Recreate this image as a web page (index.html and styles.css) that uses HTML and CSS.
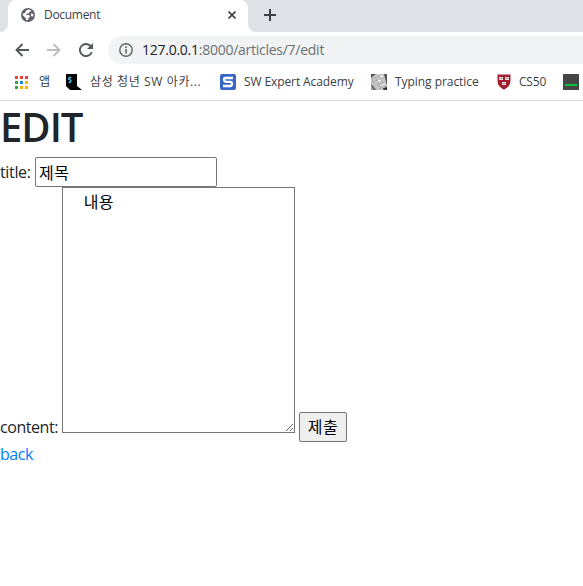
FILE: index.html
```html
<!DOCTYPE html>
<html lang="ko">
<head>
<meta charset="utf-8">
<title>Document</title>
<link rel="stylesheet" href="styles.css">
</head>
<body>
<header class="browser">
  <div class="tabs">
    <div class="tab-edge"></div>
    <div class="tab">
      <svg class="globe" width="14" height="14" viewBox="0 0 14 14"><circle cx="7" cy="7" r="7" fill="#5f6368"/><path d="M7 1.5 10 2 9.7 3.5 8.2 4 7.8 5.4 5.5 5.8 5.1 6.9 8.2 7.1 9 8.8 7.8 9.8 6.7 12.300 4.9 12.1 5 10.2 3.5 9.1 1.5 6.8 2.1 5.6 4 5.1 4.8 3.1Z M10.4 5.2 12.5 6.3 12.2 8.600 10.4 8.3 9.7 6.5Z" fill="#fff"/></svg>
      <span class="tab-title">Document</span>
      <svg class="close" width="8" height="8" viewBox="0 0 8 8"><path d="m.5.5 7 7m0-7-7 7" stroke="#3c4043" stroke-width="1.6"/></svg>
    </div>
    <div class="tab-rest"><svg width="12" height="12" viewBox="0 0 12 12"><path d="M6 0v12M0 6h12" stroke="#3c4043" stroke-width="2"/></svg></div>
  </div>
  <div class="toolbar">
    <svg class="nav" width="14" height="14" viewBox="0 0 14 14"><path d="M14 7H1.5M7.5 1l-6 6 6 6" fill="none" stroke="#54575c" stroke-width="1.9"/></svg>
    <svg class="nav" width="14" height="14" viewBox="0 0 14 14"><path d="M0 7h12.5M6.5 1l6 6-6 6" fill="none" stroke="#babcbe" stroke-width="1.9"/></svg>
    <svg class="nav" width="14" height="14" viewBox="0 0 14 14"><path d="M12.8 9A6.1 6.1 0 1 1 11.6 3" fill="none" stroke="#54575c" stroke-width="1.9"/><path d="M14 0v6H8Z" fill="#54575c"/></svg>
    <div class="address">
      <svg width="14" height="14" viewBox="0 0 14 14"><circle cx="7" cy="7" r="6.2" fill="none" stroke="#5f6368" stroke-width="1.4"/><path d="M7 6v4.5M7 3.3v1.6" stroke="#5f6368" stroke-width="1.6"/></svg>
      <span class="url"><b>127.0.0.1</b>:8000/articles/7/edit</span>
    </div>
  </div>
  <nav class="bookmarks">
    <svg class="apps" width="13" height="13" viewBox="0 0 13 13"><path d="M0 0h3v3H0zm5 0h3v3H5zm5 0h3v3h-3z" fill="#ea4335"/><path d="M0 5h3v3H0zm0 5h3v3H0z" fill="#34a050"/><path d="M5 5h3v3H5z" fill="#1a86f0"/><path d="M10 5h3v3h-3zm-5 5h3v3H5zm5 0h3v3h-3z" fill="#fbb005"/></svg>
    <span class="bm bm-apps">앱</span>
    <svg width="16" height="16" viewBox="0 0 16 16"><path d="M0 0h11v12l5 4H4l-4-4Z" fill="#000"/><path d="M5.200 3.500H3.400L2.700 4.200v1l2.200 1.200v1.200l-.7.7H2.500" fill="none" stroke="#49b7df" stroke-width="1.4"/></svg>
    <span class="bm bm-samsung">삼성 청년 SW 아카...</span>
    <svg width="16" height="16" viewBox="0 0 16 16"><rect width="16" height="16" rx="2" fill="#3868c7"/><path d="M13 4H5.500Q4 4 4 5.500T5.500 7.800h5Q12 7.800 12 9.800T10.500 12H3" fill="none" stroke="#fff" stroke-width="2.300"/></svg>
    <span class="bm bm-expert">SW Expert Academy</span>
    <svg width="16" height="16" viewBox="0 0 16 16"><path d="M0 0h16v16H0z" fill="#c9c9c9"/><path d="M0 0h5L0 4Zm13 0h3v12Z" fill="#555"/><path d="m0 9 6 7H0Z" fill="#999"/><path d="m0 5 12-4M1 8l12-4M4 12l10-4M7 15l8-3M4 3l6 12M8 2l6 11M1 5l3 7" stroke="#999" stroke-width=".5"/><path d="m9 3 3-1M7 7l3-1m1 5 3-1" stroke="#eee" stroke-width="1.5"/><path d="m1 12 3 4m8-1 4-2v3Z" stroke="#444"/></svg>
    <span class="bm bm-typing">Typing practice</span>
    <svg class="shield" width="14" height="16" viewBox="0 0 14 16"><path d="M.5.5h13V7q0 5.500-6.500 8.700Q.5 12.500.5 7Z" fill="#a51c30"/><path d="M2 3h4v3H2zm6 0h4v3H8zM5 8h4v3H5z" fill="#eee"/><path d="M4 3v3m6-3v3M7 8v3M2 4.500h4m2 0h4M5 9.500h4" stroke="#b78a8f" stroke-width=".6"/></svg>
    <span class="bm bm-cs">CS50</span>
    <svg width="16" height="16" viewBox="0 0 16 16"><path d="M0 0h16v16H0z" fill="#454545"/><path d="M2 10h12v2H2z" fill="#05c53d"/></svg>
  </nav>
</header>
<main>
  <h1>EDIT</h1>
  <form>
    <div class="row">
      <label class="title-label" for="title">title:</label>
      <input id="title" type="text" value="제목">
    </div>
    <div class="row content-row">
      <label class="content-label" for="content">content:</label>
      <textarea id="content">    내용</textarea>
      <button type="button">제출</button>
    </div>
  </form>
  <a href="#">back</a>
</main>
</body>
</html>
```
FILE: styles.css
```css
* { box-sizing: border-box; }
body { margin: 0; height: 586px; overflow: hidden; background: #fff; color: #212529; font: 16px/24px "Open Sans", "Noto Sans CJK KR", sans-serif; }
svg { display: block; flex: none; }
.browser { height: 101px; border-bottom: 1px solid #dadce0; }
.tabs { display: flex; height: 32px; background: linear-gradient(#dee1e6 0 12px, #fff 12px); }
.tab-edge { width: 8px; background: #dee1e6; border-bottom-right-radius: 8px; }
.tab { display: flex; align-items: center; width: 240px; height: 32px; padding: 0 12px 2px 13px; background: #fff; border-radius: 8px 8px 0 0; }
.tab-title { margin-left: 9px; color: #3c4043; font-size: 12px; letter-spacing: -.3px; white-space: nowrap; }
.close { margin-left: auto; }
.tab-rest { flex: 1; padding: 9px 0 0 16px; background: #dee1e6; border-bottom-left-radius: 8px; }
.toolbar { display: flex; align-items: center; height: 36px; padding-left: 15px; }
.nav { margin-right: 18px; }
.address { display: flex; flex: 1; align-items: center; height: 28px; margin-left: -3px; padding-left: 11px; background: #f1f3f4; border-radius: 14px 0 0 14px; }
.url { margin-left: 9px; color: #6b6f73; font-size: 14px; letter-spacing: -.26px; white-space: nowrap; }
.url b { color: #202124; font-weight: 400; }
.bookmarks { display: flex; align-items: center; height: 32px; padding: 0 0 4px 15px; overflow: hidden; color: #3c4043; font-size: 12px; }
.bm { flex: none; margin-left: 8px; white-space: nowrap; }
.bm-apps { width: 27px; margin-left: 11px; }
.bm-samsung { width: 130px; letter-spacing: .62px; }
.bm-expert { width: 127px; letter-spacing: -.1px; }
.bm-typing { width: 101px; letter-spacing: -.05px; }
.bm-cs { width: 44px; letter-spacing: -.2px; }
.shield { margin-left: 1px; }
h1 { height: 56px; margin: 0; padding-top: 2px; font-size: 40px; line-height: 48px; font-weight: 600; letter-spacing: -1px; }
.row { display: flex; height: 30px; }
label { flex: none; white-space: nowrap; letter-spacing: -.45px; }
.title-label { width: 35px; padding-top: 3px; letter-spacing: -.35px; }
input, textarea, button { margin: 0; border: 1px solid #767676; color: #000; font: inherit; }
input, textarea { letter-spacing: .5px; background: #fff; }
input { width: 182px; height: 30px; padding: 1px 3px; border-radius: 2px; }
.content-row { height: 255px; }
.content-label { width: 62px; padding-top: 228px; }
textarea { width: 233px; height: 246px; padding: 2px; border-radius: 0; resize: both; }
button { width: 48px; height: 30px; margin: 225px 0 0 4px; padding: 0 5px; border-radius: 2px; background: #efefef; letter-spacing: .5px; }
a { display: block; color: #007bff; text-decoration: none; letter-spacing: -.45px; }
```
